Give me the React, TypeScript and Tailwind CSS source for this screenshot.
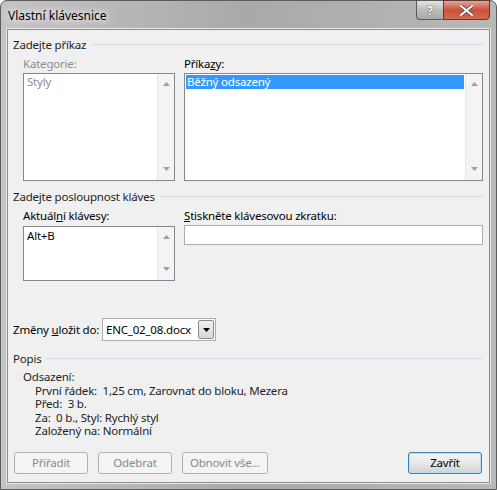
import React from 'react'

// ─── Small pieces ─────────────────────────────────────────────────────────────
function Arrow({ up }: { up?: boolean }) {
  return (
    <svg width="7" height="4" viewBox="0 0 7 4" className="block">
      {up ? (
        <path d="M3.5 0 L7 4 L0 4 Z" fill="#a0a0a0" />
      ) : (
        <path d="M0 0 L7 0 L3.5 4 Z" fill="#a0a0a0" />
      )}
    </svg>
  )
}

function ListBox({
  className,
  children,
}: {
  className?: string
  children?: React.ReactNode
}) {
  return (
    <div className={`flex border border-[#828790] bg-white ${className ?? ''}`}>
      <div className="flex-1 min-w-0 p-px">{children}</div>
      <div className="w-[17px] flex flex-col items-center justify-between bg-[#f4f4f4] border-l border-[#e8e8e8] pt-[8px] pb-[9px]">
        <Arrow up />
        <Arrow />
      </div>
    </div>
  )
}

function GroupHeader({ label }: { label: string }) {
  return (
    <div className="flex items-center h-[15px]">
      <span className="text-[#1e1e1e] whitespace-nowrap">{label}</span>
      <div className="flex-1 h-px bg-[#d5dfe5] ml-[5px]" />
    </div>
  )
}

function DisabledButton({ label, w }: { label: string; w: string }) {
  return (
    <div
      className={`${w} h-[22px] flex items-center justify-center rounded-[3px] border border-[#adb2b5] bg-[#f4f4f4] text-[#8a8a8a] whitespace-nowrap`}
    >
      {label}
    </div>
  )
}

// ─── Dialog ───────────────────────────────────────────────────────────────────
export default function App() {
  return (
    <div className="w-[497px] h-[490px] font-['Segoe_UI','Noto_Sans',sans-serif] text-[11.5px] tracking-[-0.2px] text-black bg-white">
      <div className="w-full h-full flex flex-col rounded-t-[7px] border border-[#5c5c5c] bg-gradient-to-r from-[#c4c4c4] via-[#a9a9a9] to-[#b8b8b8] px-[6px] pb-[6px]">
        {/* ── Title bar ── */}
        <div className="h-[28px] flex items-start relative">
          <span className="mt-[6px] ml-px text-[12px] tracking-normal [text-shadow:0_0_6px_#ffffff,0_0_10px_#ffffff]">
            Vlastní klávesnice
          </span>
          <div className="ml-auto -mt-px flex">
            <div className="w-[27px] h-[20px] flex items-center justify-center rounded-bl-[4px] border border-[#5a5a5a] border-r-0 bg-gradient-to-b from-[#e4e4e4] via-[#bdbdbd] to-[#a8a8a8]">
              <span className="text-white font-bold text-[13px] leading-none [text-shadow:0_0_1px_#333,0_0_1px_#333]">?</span>
            </div>
            <div className="w-[47px] h-[20px] flex items-center justify-center rounded-br-[4px] border border-[#5a3a32] bg-gradient-to-b from-[#e3a597] via-[#c9513b] to-[#d36a4d]">
              <svg width="13" height="11" viewBox="0 0 13 11">
                <path
                  d="M1 1 L12 10 M12 1 L1 10"
                  stroke="#4a4a4a"
                  strokeWidth="3.4"
                  strokeLinecap="square"
                />
                <path
                  d="M1 1 L12 10 M12 1 L1 10"
                  stroke="#ffffff"
                  strokeWidth="2"
                  strokeLinecap="square"
                />
              </svg>
            </div>
          </div>
        </div>

        {/* ── Client area ── */}
        <div className="flex-1 flex flex-col border border-[#8d8d8d] bg-[#f0f0f0] pt-[7px] pl-[5px] pr-[6px] shadow-[0_0_0_1px_#e8e8e8]">
          <GroupHeader label="Zadejte příkaz" />

          <div className="flex gap-[9px] pl-[10px] mt-[4px] h-[15px] items-center">
            <span className="w-[152px] text-[#8d8d8d]">Kategorie:</span>
            <span>
              Příka<span className="underline">z</span>y:
            </span>
          </div>

          <div className="flex gap-[9px] pl-[10px] mt-[2px]">
            <ListBox className="w-[152px] h-[108px]">
              <div className="pl-[2px] h-[14px] leading-[14px] text-[#8d8d8d]">Styly</div>
            </ListBox>
            <ListBox className="flex-1 h-[108px]">
              <div className="pl-[1px] h-[14px] leading-[14px] bg-[#3399ff] text-white">
                Běžný odsazený
              </div>
            </ListBox>
          </div>

          <div className="mt-[8px]">
            <GroupHeader label="Zadejte posloupnost kláves" />
          </div>

          <div className="flex gap-[9px] pl-[10px] mt-[4px] h-[15px] items-center">
            <span className="w-[152px]">
              Aktuál<span className="underline">n</span>í klávesy:
            </span>
            <span>
              <span className="underline">S</span>tiskněte klávesovou zkratku:
            </span>
          </div>

          <div className="flex gap-[9px] pl-[10px] mt-[2px] items-start">
            <ListBox className="w-[152px] h-[55px] mt-px">
              <div className="pl-[2px] pt-[1px] h-[15px] leading-[14px]">Alt+B</div>
            </ListBox>
            <div className="flex-1 h-[20px] border border-[#abadb3] bg-white" />
          </div>

          {/* ── Save to ── */}
          <div className="flex items-center mt-[37px] h-[23px]">
            <span className="w-[89px] whitespace-nowrap">
              Změny <span className="underline">u</span>ložit do:
            </span>
            <div className="w-[114px] h-[23px] flex items-center border border-[#abadb3] bg-white">
              <span className="flex-1 min-w-0 pl-[3px] whitespace-nowrap overflow-hidden">ENC_02_08.docx</span>
              <div className="w-[16px] h-[19px] mr-px shrink-0 flex items-center justify-center border border-[#8a8a8a] rounded-[2px] bg-gradient-to-b from-[#f2f2f2] to-[#d6d6d6]">
                <svg width="7" height="4" viewBox="0 0 7 4">
                  <path d="M0 0 L7 0 L3.5 4 Z" fill="#000" />
                </svg>
              </div>
            </div>
          </div>

          <div className="mt-[10px]">
            <GroupHeader label="Popis" />
          </div>

          {/* ── Description ── */}
          <div className="mt-[4px] pl-[10px] leading-[13.5px] text-[#1e1e1e]">
            <div>Odsazení:</div>
            <div className="pl-[12px]">
              <div>První řádek:&nbsp; 1,25 cm, Zarovnat do bloku, Mezera</div>
              <div>Před:&nbsp; 3 b.</div>
              <div>Za:&nbsp; 0 b., Styl: Rychlý styl</div>
              <div>Založený na: Normální</div>
            </div>
          </div>

          {/* ── Buttons ── */}
          <div className="flex items-center gap-[10px] mt-[14px] pl-px pr-px">
            <DisabledButton label="Přiřadit" w="w-[74px]" />
            <DisabledButton label="Odebrat" w="w-[74px]" />
            <DisabledButton label="Obnovit vše..." w="w-[86px]" />
            <div className="ml-auto w-[74px] h-[22px] flex items-center justify-center rounded-[3px] border border-[#3c7fb1] bg-gradient-to-b from-[#f4f4f4] via-[#e8e8e8] to-[#d2d2d2] shadow-[inset_0_0_0_1px_#b6e0f5]">
              Zavřít
            </div>
          </div>
        </div>
      </div>
    </div>
  )
}
